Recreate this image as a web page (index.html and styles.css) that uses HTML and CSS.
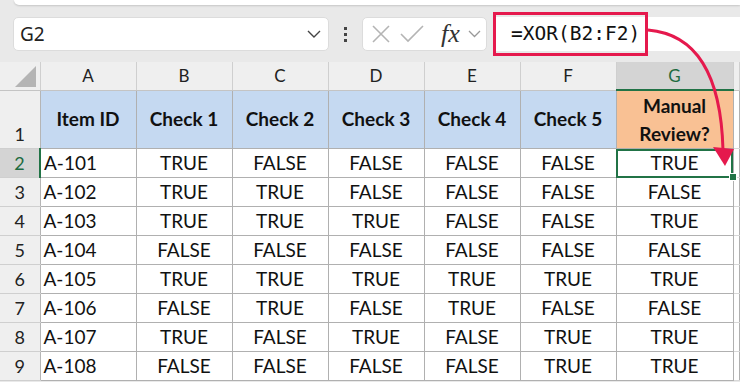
FILE: index.html
```html
<!DOCTYPE html>
<html lang="en">
<head>
    <meta charset="UTF-8">
    <meta name="viewport" content="width=device-width, initial-scale=1.0">
    <title>XOR check sheet</title>
    <link rel="stylesheet" href="styles.css">
</head>
<body>
    <div class="ribbon-edge"></div>

    <div class="formula-row">
        <div class="name-box">
            <span>G2</span>
            <svg class="chev" width="14" height="8" viewBox="0 0 14 8"><path d="M1 1 L7 7 L13 1" fill="none" stroke="#444" stroke-width="1.4"/></svg>
        </div>
        <div class="dots"><i></i><i></i><i></i></div>
        <div class="fx-box">
            <svg width="20" height="20" viewBox="0 0 20 20"><path d="M2 2 L18 18 M18 2 L2 18" stroke="#b4b4b4" stroke-width="1.6"/></svg>
            <svg width="26" height="20" viewBox="0 0 26 20"><path d="M2 10 L9 17 L24 2" fill="none" stroke="#b4b4b4" stroke-width="1.6"/></svg>
            <span class="fx">fx</span>
            <svg width="13" height="8" viewBox="0 0 13 8"><path d="M1 1 L6.5 6.5 L12 1" fill="none" stroke="#999" stroke-width="1.3"/></svg>
        </div>
        <div class="formula-bar">
            <div class="formula-box">=XOR(B2:F2)</div>
        </div>
    </div>

    <table class="sheet">
        <colgroup>
            <col class="c-row"><col class="c-col"><col class="c-col"><col class="c-col"><col class="c-col"><col class="c-col"><col class="c-col"><col class="c-wide"><col>
        </colgroup>
        <tr class="col-heads">
            <th class="corner"><span class="tri"></span></th>
            <th>A</th><th>B</th><th>C</th><th>D</th><th>E</th><th>F</th><th class="active">G</th><th></th>
        </tr>
        <tr class="title-row">
            <th class="rh bottom">1</th>
            <td class="blue">Item ID</td>
            <td class="blue">Check 1</td>
            <td class="blue">Check 2</td>
            <td class="blue">Check 3</td>
            <td class="blue">Check 4</td>
            <td class="blue">Check 5</td>
            <td class="orange">Manual<br>Review?</td>
            <td class="empty"></td>
        </tr>
        <tr>
            <th class="rh active">2</th>
            <td class="id">A-101</td><td>TRUE</td><td>FALSE</td><td>FALSE</td><td>FALSE</td><td>FALSE</td>
            <td class="selected">TRUE<span class="handle"></span></td><td class="empty"></td>
        </tr>
        <tr>
            <th class="rh">3</th>
            <td class="id">A-102</td><td>TRUE</td><td>TRUE</td><td>FALSE</td><td>FALSE</td><td>FALSE</td><td>FALSE</td><td class="empty"></td>
        </tr>
        <tr>
            <th class="rh">4</th>
            <td class="id">A-103</td><td>TRUE</td><td>TRUE</td><td>TRUE</td><td>FALSE</td><td>FALSE</td><td>TRUE</td><td class="empty"></td>
        </tr>
        <tr>
            <th class="rh">5</th>
            <td class="id">A-104</td><td>FALSE</td><td>FALSE</td><td>FALSE</td><td>FALSE</td><td>FALSE</td><td>FALSE</td><td class="empty"></td>
        </tr>
        <tr>
            <th class="rh">6</th>
            <td class="id">A-105</td><td>TRUE</td><td>TRUE</td><td>TRUE</td><td>TRUE</td><td>TRUE</td><td>TRUE</td><td class="empty"></td>
        </tr>
        <tr>
            <th class="rh">7</th>
            <td class="id">A-106</td><td>FALSE</td><td>TRUE</td><td>FALSE</td><td>TRUE</td><td>FALSE</td><td>FALSE</td><td class="empty"></td>
        </tr>
        <tr>
            <th class="rh">8</th>
            <td class="id">A-107</td><td>TRUE</td><td>FALSE</td><td>TRUE</td><td>FALSE</td><td>TRUE</td><td>TRUE</td><td class="empty"></td>
        </tr>
        <tr>
            <th class="rh">9</th>
            <td class="id">A-108</td><td>FALSE</td><td>FALSE</td><td>FALSE</td><td>FALSE</td><td>TRUE</td><td>TRUE</td><td class="empty"></td>
        </tr>
    </table>

    <!-- annotation arrow from the formula to the result cell -->
    <svg class="arrow" width="740" height="382" viewBox="0 0 740 382">
        <path d="M648 30 Q720 36 723 150" fill="none" stroke="#e5194d" stroke-width="3"/>
        <path d="M713 147 L734 149 L725 166 Z" fill="#e5194d"/>
    </svg>
</body>
</html>
```

FILE: styles.css
```css
body {
    margin: 0;
    width: 740px;
    height: 382px;
    overflow: hidden;
    background-color: #e9e9e9;
    font-family: 'Lato', 'Open Sans', sans-serif;
    color: #111;
    position: relative;
}
.ribbon-edge {
    height: 5px;
    margin-left: 14px;
    background-color: #fff;
    border-bottom-left-radius: 6px;
    box-shadow: 0 1px 2px rgba(0, 0, 0, 0.15);
}
.formula-row {
    display: flex;
    align-items: center;
    height: 34px;
    padding: 12px 0 11px 13px;
}
.name-box {
    display: flex;
    align-items: center;
    justify-content: space-between;
    width: 316px;
    height: 34px;
    box-sizing: border-box;
    padding: 0 7px 0 6px;
    background-color: #fff;
    border: 1px solid #dcdcdc;
    border-radius: 5px;
    font-family: 'Noto Sans', sans-serif;
    font-size: 19px;
    color: #222;
}
.dots {
    width: 33px;
    display: flex;
    flex-direction: column;
    align-items: center;
    gap: 3px;
}
.dots i {
    display: block;
    width: 3px;
    height: 3px;
    background-color: #444;
}
.fx-box {
    display: flex;
    align-items: center;
    width: 125px;
    height: 34px;
    box-sizing: border-box;
    padding: 0 5px 0 8px;
    gap: 8px;
    background-color: #fff;
    border: 1px solid #dcdcdc;
    border-radius: 5px;
}
.fx {
    font-family: 'Liberation Serif', serif;
    font-style: italic;
    font-size: 26px;
    color: #333;
    margin-left: 8px;
    line-height: 1;
}
.formula-bar {
    flex: 1;
    height: 34px;
    margin-left: 6px;
    background-color: #fff;
    position: relative;
}
.formula-box {
    position: absolute;
    left: 0;
    top: -5px;
    width: 155px;
    height: 44px;
    box-sizing: border-box;
    border: 3px solid #e5194d;
    padding: 0 0 0 15px;
    line-height: 38px;
    font-family: 'DejaVu Sans Mono', monospace;
    font-size: 19.5px;
    color: #111;
}
.sheet {
    border-collapse: collapse;
    table-layout: fixed;
    width: 740px;
    background-color: #fff;
}
.c-row { width: 40px; }
.c-col { width: 96px; }
.c-wide { width: 117px; }
.col-heads th {
    height: 27px;
    padding: 0;
    background-color: #efefef;
    border-right: 1px solid #cfcfcf;
    border-bottom: 1px solid #c4c4c4;
    font-weight: normal;
    font-size: 17px;
    color: #222;
}
.col-heads th.active {
    background-color: #d4d4d4;
    color: #1e6b41;
    border-bottom: 2px solid #217346;
}
.corner {
    position: relative;
}
.tri {
    position: absolute;
    right: 4px;
    bottom: 3px;
    width: 0;
    height: 0;
    border-left: 21px solid transparent;
    border-bottom: 21px solid #b4b4b4;
}
.rh {
    padding: 0;
    background-color: #efefef;
    border-right: 1px solid #b5b5b5;
    border-bottom: 1px solid #cfcfcf;
    font-weight: normal;
    font-size: 18px;
    color: #222;
}
.rh.bottom {
    vertical-align: bottom;
    padding-bottom: 3px;
}
.rh.active {
    background-color: #d4d4d4;
    color: #1e6b41;
    border-right: 2px solid #217346;
}
td {
    height: 28px;
    padding: 0;
    border: 1px solid #b0b0b0;
    text-align: center;
    font-size: 19px;
    line-height: 24px;
}
td.id {
    text-align: left;
    padding-left: 3px;
}
td.empty {
    border-top-color: #d8d8d8;
    border-bottom-color: #d8d8d8;
}
.title-row td {
    height: 57px;
    font-weight: bold;
    line-height: 28px;
}
.blue {
    background-color: #c5d9f1;
}
.orange {
    background-color: #f9c194;
}
td.selected {
    position: relative;
    outline: 2px solid #217346;
    outline-offset: -2px;
}
.handle {
    position: absolute;
    right: -4px;
    bottom: -4px;
    width: 6px;
    height: 6px;
    background-color: #217346;
    border: 1px solid #fff;
}
.arrow {
    position: absolute;
    left: 0;
    top: 0;
    pointer-events: none;
}
```
